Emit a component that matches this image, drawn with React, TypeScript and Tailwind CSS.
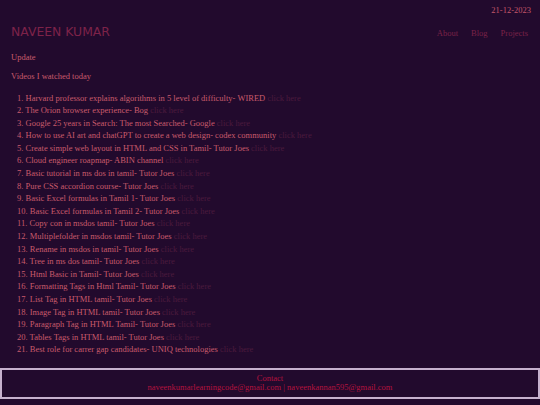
import React from "react";

const items: string[] = [
  "Harvard professor explains algorithms in 5 level of difficulty- WIRED",
  "The Orion browser experience- Bog",
  "Google 25 years in Search: The most Searched- Google",
  "How to use AI art and chatGPT to create a web design- codex community",
  "Create simple web layout in HTML and CSS in Tamil- Tutor Joes",
  "Cloud engineer roapmap- ABIN channel",
  "Basic tutorial in ms dos in tamil- Tutor Joes",
  "Pure CSS accordion course- Tutor Joes",
  "Basic Excel formulas in Tamil 1- Tutor Joes",
  "Basic Excel formulas in Tamil 2- Tutor Joes",
  "Copy con in msdos tamil- Tutor Joes",
  "Multiplefolder in msdos tamil- Tutor Joes",
  "Rename in msdos in tamil- Tutor Joes",
  "Tree in ms dos tamil- Tutor Joes",
  "Html Basic in Tamil- Tutor Joes",
  "Formatting Tags in Html Tamil- Tutor Joes",
  "List Tag in HTML tamil- Tutor Joes",
  "Image Tag in HTML tamil- Tutor Joes",
  "Paragraph Tag in HTML Tamil- Tutor Joes",
  "Tables Tags in HTML tamil- Tutor Joes",
  "Best role for carrer gap candidates- UNIQ technologies",
];

export default function App() {
  return (
    <div
      className="w-[540px] h-[405px] bg-[#220a2d] overflow-hidden flex flex-col text-[8.5px] text-[#c95b6c]"
      style={{ fontFamily: '"Liberation Serif", "Times New Roman", serif' }}
    >
      <div className="flex justify-end pr-[9px] pt-[5px] h-[15px] leading-[10px] text-[#c4566a]">
        21-12-2023
      </div>
      <div className="flex items-center justify-between pl-[11px] pr-[12px] mt-[10px] h-[14px]">
        <div
          className="text-[12.4px] text-[#7d2249] leading-[14px]"
          style={{ fontFamily: '"DejaVu Sans", Verdana, sans-serif' }}
        >
          NAVEEN KUMAR
        </div>
        <nav className="flex gap-[13px] text-[#7a2248] leading-[10px] mt-[2px]">
          <span>About</span>
          <span>Blog</span>
          <span>Projects</span>
        </nav>
      </div>
      <div className="pl-[11px] mt-[13px] leading-[10px]">Update</div>
      <div className="pl-[11px] mt-[9px] leading-[10px]">Videos I watched today</div>
      <ol className="pl-[17px] mt-[10.5px] flex flex-col">
        {items.map((t, i) => (
          <li key={i} className="h-[12.6px] leading-[12.6px] whitespace-nowrap">
            {i + 1}. {t} <span className="text-[#4c1a3d]">click here</span>
          </li>
        ))}
      </ol>
      <footer className="mt-[12px] h-[31px] border-2 border-[#c7b1ce] flex flex-col items-center justify-center text-[#b3133f] leading-[9.5px]">
        <div>Contact</div>
        <div>naveenkumarlearningcode@gmail.com | naveenkannan595@gmail.com</div>
      </footer>
    </div>
  );
}
